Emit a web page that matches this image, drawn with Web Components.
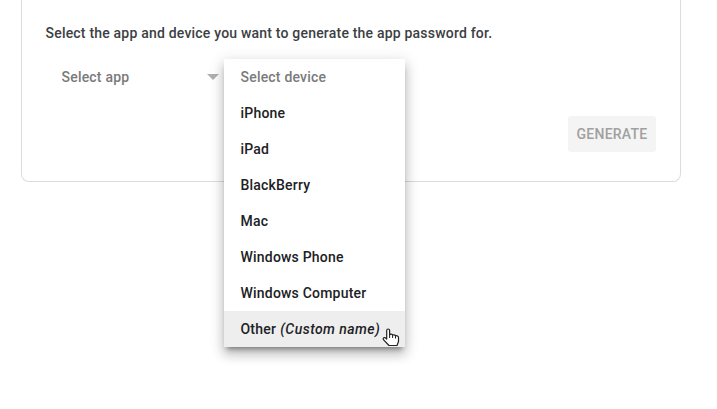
<!DOCTYPE html>
<html lang="en"><head><meta charset="utf-8"><title>App passwords</title>
<style>html,body{margin:0;background:#fff}body{width:717px;height:409px;overflow:hidden;font:500 14px/20px Roboto,sans-serif;letter-spacing:.2px;color:#202124}i{letter-spacing:.45px;margin-left:.5px}</style></head>
<body>
<password-card>
<span slot="prompt">Select the app and device you want to generate the app password for.</span>
<select-field slot="fields">Select app</select-field>
<device-menu slot="fields">
<menu-option muted>Select device</menu-option><menu-option>iPhone</menu-option><menu-option>iPad</menu-option><menu-option>BlackBerry</menu-option><menu-option>Mac</menu-option><menu-option>Windows Phone</menu-option><menu-option>Windows Computer</menu-option><menu-option active>Other <i>(Custom name)</i></menu-option>
</device-menu>
<generate-button slot="action">GENERATE</generate-button>
</password-card>
<hand-cursor></hand-cursor>
<script>
function define(name, html) {
  const t = document.createElement('template');
  t.innerHTML = html;
  customElements.define(name, class extends HTMLElement {
    constructor() { super(); this.attachShadow({mode:'open'}).append(t.content.cloneNode(true)); }
  });
}
define('password-card', `<style>:host{display:block;box-sizing:border-box;width:660px;height:182px;margin:0 0 0 21px;padding:23px 24px 0 23.5px;border:1px solid #dadce0;border-top:0;border-radius:0 0 8px 8px;color:#3c4043}
.prompt{height:20px;white-space:nowrap}.fields{display:flex;margin-top:16px;height:36px}.action{display:flex;justify-content:flex-end;margin-top:21px}</style>
<div class="prompt"><slot name="prompt"></slot></div><div class="fields"><slot name="fields"></slot></div><div class="action"><slot name="action"></slot></div>`);
define('select-field', `<style>:host{display:flex;box-sizing:border-box;width:178.5px;height:36px;padding:0 5px 0 16px;align-items:center;justify-content:space-between;color:#7a7a7a}svg{display:block}</style><span><slot></slot></span><svg width="12" height="6"><path d="M0 0H12L6 6Z" fill="#b0b0b0"/></svg>`);
define('device-menu', `<style>:host{display:block;position:relative;z-index:1;width:181px;height:288px;background:#fff;box-shadow:0 5px 5px -3px rgba(0,0,0,.4),0 8px 10px 1px rgba(0,0,0,.14),0 3px 14px 2px rgba(0,0,0,.12);color:#202124}</style><slot></slot>`);
define('menu-option', `<style>:host{display:flex;align-items:center;height:36px;padding-left:16.5px;white-space:pre}:host([muted]){color:#7a7a7a}:host([active]){background:#eee}</style><span><slot></slot></span>`);
define('generate-button', `<style>:host{display:flex;align-items:center;justify-content:center;width:88px;height:36px;border-radius:3px;background:#f4f4f4;color:#a0a0a0;letter-spacing:.25px}</style><slot></slot>`);
define('hand-cursor', `<style>:host{position:absolute;left:382px;top:328px;z-index:2}svg{display:block}</style><svg width="18" height="19" viewBox="0 0 18 19"><path d="M4.7 11V2.5C4.7 .5 7.6 .5 7.6 2.5V6.8C8.5 5.8 10.3 6 10.6 7.2C11.6 6.3 13.2 6.8 13.5 8C14.8 7.3 16.5 8 16.5 9.5V13.5L15 17.5H7L1.4 11.7C.6 10 2.4 9 3.6 10Z" fill="#fff" stroke="#222" stroke-width="1.2" stroke-linejoin="round"/><path d="M7.6 6.5V10M10.6 7V10M13.5 8V10.5" fill="none" stroke="#222"/></svg>`);
</script></body></html>
